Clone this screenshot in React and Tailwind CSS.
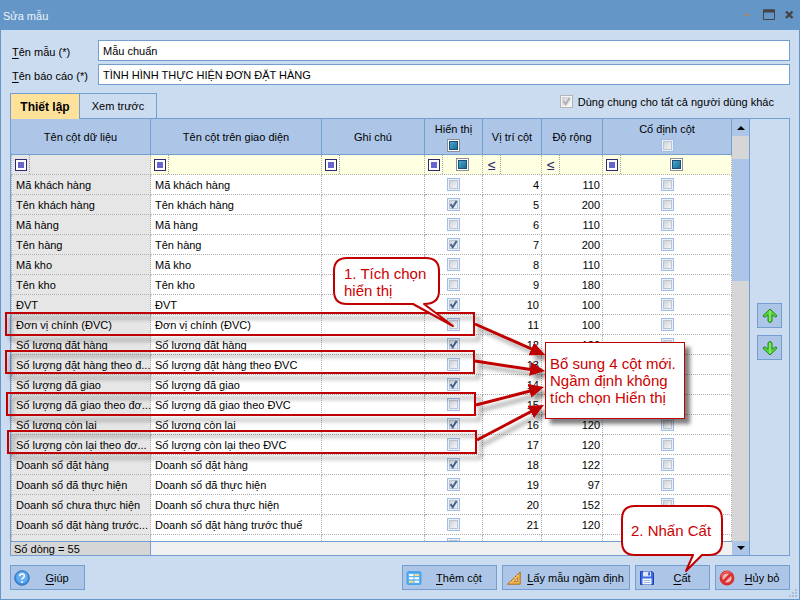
import React, { useState } from 'react';

const initialRows = [
  { id: 4, name: 'Mã khách hàng', label: 'Mã khách hàng', visible: false, width: 110 },
  { id: 5, name: 'Tên khách hàng', label: 'Tên khách hàng', visible: true, width: 200 },
  { id: 6, name: 'Mã hàng', label: 'Mã hàng', visible: false, width: 110 },
  { id: 7, name: 'Tên hàng', label: 'Tên hàng', visible: true, width: 200 },
  { id: 8, name: 'Mã kho', label: 'Mã kho', visible: false, width: 110 },
  { id: 9, name: 'Tên kho', label: 'Tên kho', visible: false, width: 180 },
  { id: 10, name: 'ĐVT', label: 'ĐVT', visible: true, width: 100 },
  { id: 11, name: 'Đơn vị chính (ĐVC)', label: 'Đơn vị chính (ĐVC)', visible: false, width: 100 },
  { id: 12, name: 'Số lượng đặt hàng', label: 'Số lượng đặt hàng', visible: true, width: 120 },
  { id: 13, name: 'Số lượng đặt hàng theo đ...', label: 'Số lượng đặt hàng theo ĐVC', visible: false },
  { id: 14, name: 'Số lượng đã giao', label: 'Số lượng đã giao', visible: true },
  { id: 15, name: 'Số lượng đã giao theo đơ...', label: 'Số lượng đã giao theo ĐVC', visible: false },
  { id: 16, name: 'Số lượng còn lại', label: 'Số lượng còn lại', visible: true, width: 120 },
  { id: 17, name: 'Số lượng còn lại theo đơ...', label: 'Số lượng còn lại theo ĐVC', visible: false, width: 120 },
  { id: 18, name: 'Doanh số đặt hàng', label: 'Doanh số đặt hàng', visible: true, width: 122 },
  { id: 19, name: 'Doanh số đã thực hiện', label: 'Doanh số đã thực hiện', visible: true, width: 97 },
  { id: 20, name: 'Doanh số chưa thực hiện', label: 'Doanh số chưa thực hiện', visible: true, width: 152 },
  { id: 21, name: 'Doanh số đặt hàng trước...', label: 'Doanh số đặt hàng trước thuế', visible: false, width: 120 },
];

const CheckBox = ({ checked = false, onChange = () => {}, label, id, disabled = false }) => (
  <span className="inline-grid h-[13px] w-[13px] shrink-0">
    <input
      type="checkbox"
      id={id}
      checked={checked}
      onChange={onChange}
      disabled={disabled}
      aria-label={label}
      className={`col-start-1 row-start-1 m-0 h-[13px] w-[13px] appearance-none border bg-linear-to-br from-[#c4c9d1] to-white ${disabled ? 'border-[#b4b4b4] shadow-[inset_0_0_0_1px_#f4f4f4]' : 'border-[#9fbde8] shadow-[inset_0_0_0_1px_#eaf1fb,inset_0_0_0_2px_#bcc4d0]'}`}
    />
    {checked && (
      <svg viewBox="0 0 13 13" className="pointer-events-none col-start-1 row-start-1 h-[13px] w-[13px]">
        <path d="M3.5 6.2 L5.7 9.2 L9.6 3" fill="none" stroke={disabled ? '#b0b0b0' : '#44648f'} strokeWidth="2" />
      </svg>
    )}
  </span>
);

// Tri-state box, drawn as a filled teal square
const MixedBox = ({ label }) => (
  <input
    type="checkbox"
    aria-label={label}
    className="m-0 h-[13px] w-[13px] shrink-0 appearance-none border border-[#8a8f98] bg-linear-to-br from-[#57b7dc] to-[#0b5c8c] shadow-[inset_0_0_0_1px_#ffffff,inset_0_0_0_2px_#1d4f74]"
  />
);

const FilterCell = ({ operator = 'box', first = false, children }) => (
  <td className={`h-5 border-r border-b border-dotted border-[#b0b0b0] p-0 ${first ? 'border-l bg-[#e6e6e6]' : 'bg-[#ffffe1]'}`}>
    <div className="flex h-[19px]">
      <button type="button" aria-label="Điều kiện lọc" className="flex w-[18px] shrink-0 items-center border-r border-dotted border-[#a0a0a0] pl-[3px]">
        {operator === 'box' ? (
          <svg width="12" height="12" viewBox="0 0 12 12">
            <rect x="0.5" y="0.5" width="11" height="11" fill="#fff" stroke="#2b2b6e" />
            <rect x="3" y="3" width="6" height="6" fill="#6666cc" />
          </svg>
        ) : (
          <span className="pl-0.5 text-[14px] leading-4 text-[#2b2b6e]">≤</span>
        )}
      </button>
      <div className="flex flex-1 items-center justify-center">{children}</div>
    </div>
  </td>
);

const CheckCell = ({ children }) => (
  <td className="h-5 border-r border-b border-dotted border-[#b0b0b0] p-0">
    <div className="flex h-[19px] items-center justify-center">{children}</div>
  </td>
);

const HeadCell = ({ title, children }) => (
  <th scope="col" className="h-9 border-r border-b border-[#739fd0] bg-[#adc6e8] p-0 text-center font-normal">
    <div className="flex flex-col items-center gap-[3px] leading-[14px]">
      <span>{title}</span>
      {children}
    </div>
  </th>
);

const ToolButton = ({ icon, hotkey, text, className }) => (
  <button type="button" className={`flex h-[25px] items-center border border-[#739fd0] bg-[#adc6e8] pl-[3px] ${className}`}>
    <span className="h-4 w-4 shrink-0">{icon}</span>
    <span className="flex-1 text-center whitespace-nowrap"><u className="underline-offset-2">{hotkey}</u>{text}</span>
  </button>
);

const HelpIcon = () => (
  <svg viewBox="0 0 16 16" className="h-4 w-4">
    <circle cx="8" cy="8" r="7.3" fill="#3f8fe0" stroke="#2566ad" strokeWidth="0.8" />
    <circle cx="8" cy="7.4" r="5.8" fill="#64adf2" />
    <path d="M5.7 6.2 C5.7 3.2 10.4 3.2 10.4 6 C10.4 7.8 8 7.7 8 9.6" fill="none" stroke="#fff" strokeWidth="1.6" />
    <circle cx="8" cy="12" r="1" fill="#fff" />
  </svg>
);

const TableIcon = () => (
  <svg viewBox="0 0 16 16" className="h-4 w-4">
    <rect x="0.5" y="1" width="15" height="14" rx="2.5" fill="#45a5ee" />
    <rect x="2" y="3" width="12" height="10.5" fill="#5fb3f2" />
    <path d="M3 4h4.5v2H3zM3 7.3h4.5v2H3zM8.5 10.7H13v2H8.5z" fill="#fff" />
    <path d="M8.5 4H13v2H8.5zM3 10.7h4.5v2H3z" fill="#f9dc7c" />
    <path d="M8.5 7.3H13v2H8.5z" fill="#fff" />
  </svg>
);

const RulerIcon = () => (
  <svg viewBox="0 0 16 16" className="h-4 w-4">
    <path d="M1.5 14.2 L14.2 2 V14.2 Z" fill="#f2b24a" stroke="#a8701f" />
    <path d="M8 11.5 L11.6 8 V11.5 Z" fill="#d9e4f2" stroke="#a8701f" strokeWidth="0.8" />
    <path d="M4 12l1 1M6.3 9.7l1 1M8.6 7.5l1 1M11 5.2l1 1" stroke="#fff0c4" />
  </svg>
);

const SaveIcon = () => (
  <svg viewBox="0 0 16 16" className="h-4 w-4">
    <path d="M1.5 1.5H13L14.5 3V14.5H1.5Z" fill="#3a6ae8" stroke="#1f3fb0" />
    <path d="M4 1.5H12V6.5H4Z" fill="#dfe8f7" />
    <path d="M9.2 2.3H11V5.5H9.2Z" fill="#2f5fe0" />
    <path d="M3.5 8.5H12.5V14.5H3.5Z" fill="#f4f8ff" />
    <path d="M4.8 10.5H11.2M4.8 12.5H11.2" stroke="#9db8e6" />
  </svg>
);

const CancelIcon = () => (
  <svg viewBox="0 0 16 16" className="h-4 w-4">
    <circle cx="8" cy="8" r="6" fill="#f3b5b5" stroke="#d93030" strokeWidth="2.8" />
    <path d="M4 12 L12 4" stroke="#d93030" strokeWidth="2.8" />
    <path d="M2.4 6.5 A6 6 0 0 1 12 3.2" fill="none" stroke="#f08080" strokeWidth="1" />
  </svg>
);

const MoveIcon = ({ down = false }) => (
  <svg viewBox="0 0 16 16" className={down ? 'h-4 w-4 rotate-180' : 'h-4 w-4'}>
    <path
      d="M8 1 L14.8 7.4 Q15 9.6 12.6 8.8 L10 6.8 V13.2 Q8 16 6 13.2 V6.8 L3.4 8.8 Q1 9.6 1.2 7.4 Z"
      fill="#55d437"
      stroke="#1f8a17"
    />
    <path d="M8 2.8 V13" stroke="#a6f08c" strokeWidth="1.2" />
  </svg>
);

// Guide marks drawn over the dialog
const GuideMarks = () => (
  <div className="pointer-events-none absolute top-0 left-0 text-[15px] leading-[17px] text-[#cc0000]">
    <svg width="800" height="600" viewBox="0 0 800 600" className="block">
      <defs>
        <marker id="head" markerUnits="userSpaceOnUse" markerWidth="15" markerHeight="14" refX="15" refY="7" orient="auto">
          <path d="M0 0 L15 7 L0 14 Z" fill="#c00000" />
        </marker>
      </defs>
      <g fill="none" stroke="#c00000" className="drop-shadow-[5px_5px_2px_rgba(0,0,0,0.4)]">
        <g strokeWidth="2">
          <rect x="6" y="313" width="468" height="22" />
          <rect x="6" y="351" width="468" height="22" />
          <rect x="7" y="393" width="468" height="22" />
          <rect x="8" y="431" width="468" height="22" />
        </g>
        <g strokeWidth="3">
          <path d="M475 324 L534 350" />
          <path d="M475 361 L534 370" />
          <path d="M476 405 L534 390" />
          <path d="M477 440 L534 410" />
        </g>
        <g stroke="none">
          <path d="M475 324 L545 355" markerEnd="url(#head)" />
          <path d="M475 361 L545 371" markerEnd="url(#head)" />
          <path d="M476 405 L544 387" markerEnd="url(#head)" />
          <path d="M477 440 L544 405" markerEnd="url(#head)" />
        </g>
      </g>
      <g fill="#fff" stroke="#c00000" strokeWidth="2" strokeLinejoin="round">
        <path d="M347 258 H426 Q439 258 439 271 V291 Q439 304 424 304 L453 326 L413 304 H347 Q334 304 334 291 V271 Q334 258 347 258 Z" />
        <path d="M635 506 H709 Q722 506 722 519 V542 Q722 555 709 555 H702 L686 571 L693 555 H635 Q622 555 622 542 V519 Q622 506 635 506 Z" />
      </g>
    </svg>
    <p className="absolute top-[265px] left-[344px] whitespace-nowrap">1. Tích chọn<br />hiển thị</p>
    <p className="absolute top-[342px] left-[545px] w-[140px] border border-[#c00000] bg-white py-3 pl-1 whitespace-nowrap shadow-[5px_5px_4px_rgba(0,0,0,0.5)]">
      Bổ sung 4 cột mới.<br />Ngầm định không<br />tích chọn Hiển thị
    </p>
    <p className="absolute top-[522px] left-[631px] whitespace-nowrap">2. Nhấn Cất</p>
  </div>
);

const App = () => {
  const [rows, setRows] = useState(initialRows);
  const [title, setTitle] = useState('Mẫu chuẩn');
  const [reportName, setReportName] = useState('TÌNH HÌNH THỰC HIỆN ĐƠN ĐẶT HÀNG');

  const toggleRow = (id, key) => {
    setRows(rows.map((row) => (row.id === id ? { ...row, [key]: !row[key] } : row)));
  };

  const cell = 'h-5 border-r border-b border-dotted border-[#b0b0b0] py-0';

  return (
    <div className="relative flex h-screen flex-col overflow-hidden bg-[#ccdcf0] font-['Liberation_Sans',Arial,sans-serif] text-[11px] leading-4 text-black">
      {/* Title bar */}
      <header className="flex h-[30px] shrink-0 items-center bg-[#6496c8] pr-[5px] pl-[3px]">
        <h1 className="flex-1 pt-0.5 text-[#eef4fb]">Sửa mẫu</h1>
        <div className="flex items-center gap-2">
          <button type="button" aria-label="Thu nhỏ" className="h-3 w-3">
            <svg viewBox="0 0 12 12" className="h-3 w-3"><path d="M1 6H7" stroke="#9c8a78" strokeWidth="2" /></svg>
          </button>
          <button type="button" aria-label="Phóng to" className="h-3 w-3">
            <svg viewBox="0 0 12 12" className="h-3 w-3"><path d="M.5 1H11.5V10.5H.5Z" fill="none" stroke="#444" /><path d="M0 2H12" stroke="#444" strokeWidth="3" /></svg>
          </button>
          <button type="button" aria-label="Đóng" className="h-3 w-3">
            <svg viewBox="0 0 12 12" className="h-3 w-3"><path d="M3 2.5L9.5 9M9.5 2.5L3 9" stroke="#444" strokeWidth="2.4" /></svg>
          </button>
        </div>
      </header>

      <main className="flex min-h-0 flex-1 flex-col border-x border-b border-[#6496c8] px-[9px] pt-2.5 pb-[9px]">
        <div className="grid grid-cols-[88px_1fr] gap-y-[3px]">
          <label htmlFor="title" className="pt-1 pl-0.5"><u className="underline-offset-2">T</u>ên mẫu (*)</label>
          <input id="title" value={title} onChange={(e) => setTitle(e.target.value)} className="h-[21px] border border-[#739fd0] bg-white px-1" />
          <label htmlFor="report" className="pt-1 pl-0.5"><u className="underline-offset-2">T</u>ên báo cáo (*)</label>
          <input id="report" value={reportName} onChange={(e) => setReportName(e.target.value)} className="h-[21px] border border-[#739fd0] bg-white px-1" />
        </div>

        {/* Tabs */}
        <div className="mt-2 flex h-[25px] shrink-0">
          <button type="button" className="z-10 -mb-px w-[69px] border-t border-l border-[#739fd0] bg-[#ffe29a] text-[12px] font-bold">Thiết lập</button>
          <button type="button" className="w-[78px] border border-b-0 border-[#739fd0]">Xem trước</button>
          <label htmlFor="shared" className="mr-4 ml-auto flex items-center gap-[5px] pb-2">
            <CheckBox id="shared" checked disabled />
            Dùng chung cho tất cả người dùng khác
          </label>
        </div>

        {/* Column grid */}
        <div className="flex min-h-0 flex-1 border border-[#739fd0]">
          <div className="flex min-w-0 flex-1 flex-col">
            <div className="min-h-0 flex-1 overflow-hidden bg-white">
              <table className="w-full table-fixed border-separate border-spacing-0">
                <colgroup>
                  <col className="w-[140px]" />
                  <col />
                  <col className="w-[103px]" />
                  <col className="w-[58px]" />
                  <col className="w-[59px]" />
                  <col className="w-[61px]" />
                  <col className="w-[129px]" />
                </colgroup>
                <thead>
                  <tr>
                    <HeadCell title="Tên cột dữ liệu" />
                    <HeadCell title="Tên cột trên giao diện" />
                    <HeadCell title="Ghi chú" />
                    <HeadCell title="Hiển thị"><MixedBox label="Hiển thị tất cả" /></HeadCell>
                    <HeadCell title="Vị trí cột" />
                    <HeadCell title="Độ rộng" />
                    <HeadCell title="Cố định cột"><CheckBox label="Cố định tất cả" /></HeadCell>
                  </tr>
                </thead>
                <tbody>
                  <tr>
                    <FilterCell first />
                    <FilterCell />
                    <FilterCell />
                    <FilterCell><MixedBox label="Lọc hiển thị" /></FilterCell>
                    <FilterCell operator="lte" />
                    <FilterCell operator="lte" />
                    <FilterCell><MixedBox label="Lọc cố định cột" /></FilterCell>
                  </tr>
                  {rows.map((row) => (
                    <tr key={row.id}>
                      <td className={`${cell} border-l bg-[#e6e6e6] pr-0 pl-1 whitespace-nowrap`}>{row.name}</td>
                      <td className={`${cell} truncate px-1`}>{row.label}</td>
                      <td className={`${cell} px-1`}></td>
                      <CheckCell>
                        <CheckBox label={`Hiển thị ${row.label}`} checked={row.visible} onChange={() => toggleRow(row.id, 'visible')} />
                      </CheckCell>
                      <td className={`${cell} pr-0.5 pl-0 text-right`}>{row.id}</td>
                      <td className={`${cell} pr-0.5 pl-0 text-right`}>{row.width}</td>
                      <CheckCell>
                        <CheckBox label={`Cố định ${row.label}`} checked={!!row.frozen} onChange={() => toggleRow(row.id, 'frozen')} />
                      </CheckCell>
                    </tr>
                  ))}
                  <tr>
                    <td className={`${cell} border-l bg-[#e6e6e6] px-1`}></td>
                    <td className={cell}></td>
                    <td className={cell}></td>
                    <CheckCell><CheckBox label="Hiển thị" /></CheckCell>
                    <td className={cell}></td>
                    <td className={cell}></td>
                    <CheckCell><CheckBox label="Cố định" /></CheckCell>
                  </tr>
                </tbody>
              </table>
            </div>
            <div className="flex h-3.5 shrink-0 border-t border-[#739fd0] bg-[#f0f0f0] leading-[14px]">
              <span className="w-[140px] border-r border-[#739fd0] bg-[#d6d6d6] pl-[3px]">Số dòng = 55</span>
            </div>
          </div>

          {/* Scroll bar */}
          <div className="flex w-[18px] shrink-0 flex-col border-r border-[#739fd0] bg-[#d6d6d6]">
            <button type="button" aria-label="Cuộn lên" className="flex h-[17px] items-center justify-center bg-[#adc6e8]">
              <svg width="8" height="4" viewBox="0 0 8 4"><path d="M4 0L8 4H0Z" fill="#000" /></svg>
            </button>
            <div className="mt-[23px] h-[122px] bg-[#adc6e8]"></div>
            <button type="button" aria-label="Cuộn xuống" className="mt-auto flex h-3.5 items-center justify-center bg-[#adc6e8]">
              <svg width="8" height="4" viewBox="0 0 8 4"><path d="M0 0H8L4 4Z" fill="#000" /></svg>
            </button>
          </div>

          <div className="flex w-[39px] shrink-0 flex-col items-center gap-[7px] pt-46">
            <button type="button" aria-label="Chuyển lên" className="flex h-[25px] w-[25px] items-center justify-center border border-[#739fd0] bg-[#adc6e8]"><MoveIcon /></button>
            <button type="button" aria-label="Chuyển xuống" className="flex h-[25px] w-[25px] items-center justify-center border border-[#739fd0] bg-[#adc6e8]"><MoveIcon down /></button>
          </div>
        </div>

        <footer className="mt-[9px] flex shrink-0 gap-[5px]">
          <ToolButton className="mr-auto w-[75px]" icon={<HelpIcon />} hotkey="G" text="iúp" />
          <ToolButton className="w-[95px]" icon={<TableIcon />} hotkey="T" text="hêm cột" />
          <ToolButton className="w-32" icon={<RulerIcon />} hotkey="L" text="ấy mẫu ngầm định" />
          <ToolButton className="w-[75px]" icon={<SaveIcon />} hotkey="C" text="ất" />
          <ToolButton className="w-[75px]" icon={<CancelIcon />} hotkey="H" text="ủy bỏ" />
        </footer>
      </main>

      {/* Resize grip */}
      <svg width="9" height="9" viewBox="0 0 9 9" className="absolute right-0.5 bottom-0.5">
        <path d="M6 0h2v2H6zM3 3h2v2H3zM6 3h2v2H6zM0 6h2v2H0zM3 6h2v2H3zM6 6h2v2H6z" fill="#a9bdd8" />
      </svg>

      <GuideMarks />
    </div>
  );
};

export default App;
